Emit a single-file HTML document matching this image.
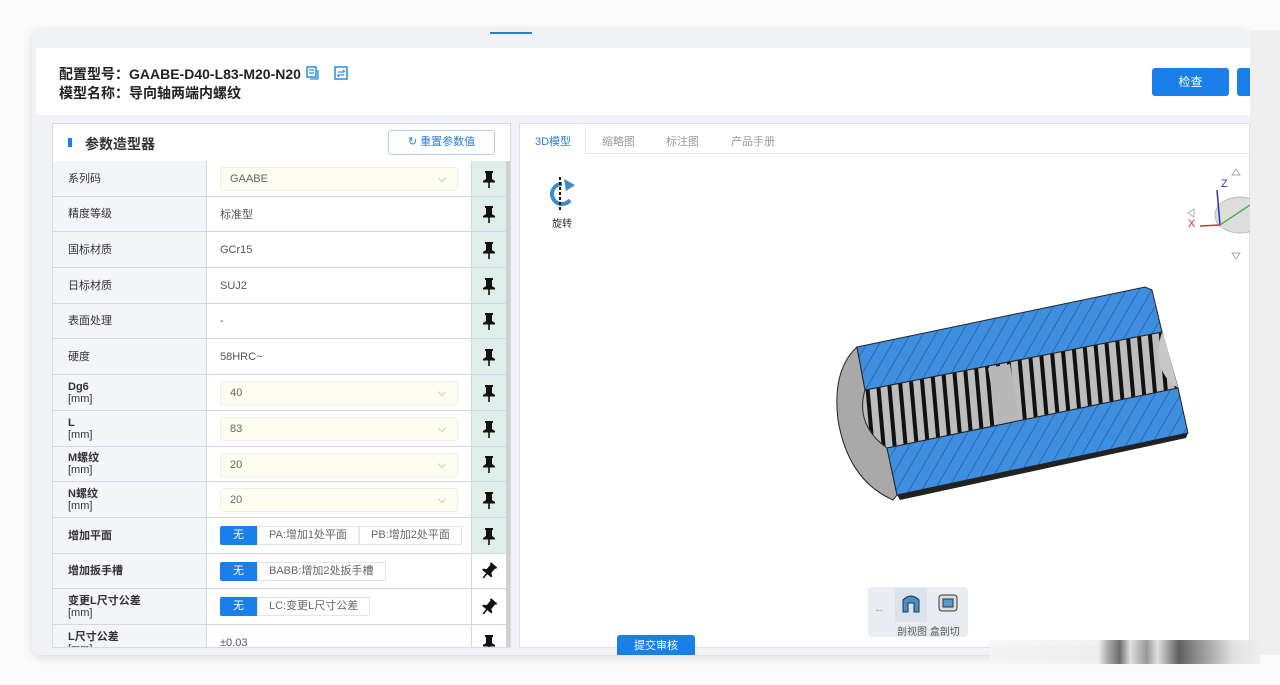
<!DOCTYPE html>
<html><head><meta charset="utf-8">
<style>
*{margin:0;padding:0;box-sizing:border-box}
body{width:1280px;height:685px;overflow:hidden;background:#fbfbfb;font-family:"Liberation Sans","Noto Sans CJK SC",sans-serif;position:relative;color:#333}
.abs{position:absolute}
.frame{left:32px;top:30px;width:1218px;height:625px;background:#f0f2f5;border-radius:8px;box-shadow:0 2px 10px rgba(0,0,0,.15);overflow:hidden}
.rightgray{left:1250px;top:30px;width:30px;height:625px;background:#efefef}
.hdr{left:36px;top:48px;width:1214px;height:67px;background:#fff}
.t1{left:59px;top:64px;font-size:14px;font-weight:bold;color:#222}
.t2{left:59px;top:83px;font-size:14px;font-weight:bold;color:#222}
.btn{background:#1a7fe8;color:#fff;font-size:12px;text-align:center;border-radius:3px}
.lp{left:52px;top:123px;width:459px;height:525px;background:#fff;border:1px solid #d5dbe3;overflow:hidden}
#rows{background:#cfd9e4}
.row{position:absolute;left:0;width:453px;background:#fff}
.lab{position:absolute;left:0;top:0;width:154px;height:100%;background:#f3f5f8;border-right:1px solid #cfd9e4;font-size:11px;color:#333;padding-left:15px;display:flex;flex-direction:column;justify-content:center;line-height:12px}
.lab b{font-weight:bold}
.val{position:absolute;left:155px;top:0;width:263px;height:100%;font-size:11px;color:#555;display:flex;align-items:center;padding-left:12px}
.sel{position:absolute;left:167px;top:6px;width:238px;height:24px;background:#fdfdf0;border:1px solid #eee;border-radius:3px;font-size:11px;color:#666;padding-left:9px;line-height:22px}
.sel:after{content:"";position:absolute;right:12px;top:7px;width:5px;height:5px;border-right:1px solid #ccc;border-bottom:1px solid #ccc;transform:rotate(45deg)}
.pin{position:absolute;left:418px;top:0;width:35px;height:100%;display:flex;align-items:center;justify-content:center;border-left:1px solid #cfd9e4}
.g{background:#dfeee9}
.seg{position:absolute;left:167px;top:8px;height:19px;display:flex;font-size:11px}
.seg span{border:1px solid #e2e5ea;padding:0 11px;line-height:17px;color:#666;background:#fff}
.seg span.on{background:#1a7fe8;color:#fff;border-color:#1a7fe8;padding:0 12px;border-radius:2px 0 0 2px}
.rp{left:519px;top:123px;width:731px;height:525px;background:#fff;border:1px solid #dde2e8}
.tab{font-size:11px;color:#999;top:133px}
</style></head><body>
<svg width="0" height="0" style="position:absolute"><defs>
<symbol id="p" viewBox="0 0 14 18"><path d="M3 1h8v2h-1v6l3 2v1.5H1V11l3-2V3H3z" fill="#111"/><rect x="6.2" y="12" width="1.6" height="6" fill="#111"/></symbol>
<symbol id="p2" viewBox="0 0 18 18"><g transform="rotate(40 9 9)"><path d="M5 1h8v2h-1v6l3 2v1.5H3V11l3-2V3H5z" fill="#111"/><rect x="8.2" y="12" width="1.6" height="6" fill="#111"/></g></symbol>
</defs></svg>
<div class="abs frame"></div>
<div class="abs rightgray"></div>
<div class="abs" style="left:490px;top:32px;width:42px;height:2px;background:#2b7fc4"></div>
<div class="abs hdr"></div>
<div class="abs t1">配置型号：GAABE-D40-L83-M20-N20</div>
<div class="abs t2">模型名称：导向轴两端内螺纹</div>
<svg class="abs" style="left:306px;top:66px" width="14" height="14"><rect x="1" y="1" width="9" height="10" fill="none" stroke="#2d8ad6" stroke-width="1.5"/><path d="M3 4h5M3 7h5M12 4v9H4" stroke="#2d8ad6" stroke-width="1.3" fill="none"/></svg>
<svg class="abs" style="left:334px;top:66px" width="14" height="14"><rect x="1" y="1" width="12" height="12" fill="none" stroke="#2d8ad6" stroke-width="1.5"/><path d="M4 6h6M4 9h6M9 4l2 2M5 11l-2-2" stroke="#2d8ad6" stroke-width="1.2" fill="none"/></svg>
<div class="abs btn" style="left:1152px;top:68px;width:77px;height:28px;line-height:28px">检查</div>
<div class="abs btn" style="left:1237px;top:68px;width:13px;height:28px;border-radius:3px 0 0 3px"></div>

<div class="abs lp">
 <div class="abs" style="left:15px;top:14px;width:4px;height:9px;background:#1a7fe8"></div>
 <div class="abs" style="left:32px;top:10px;font-size:14px;font-weight:bold;color:#333">参数造型器</div>
 <div class="abs" style="left:335px;top:6px;width:107px;height:25px;border:1px solid #b9cfe6;border-radius:3px;font-size:11px;color:#2d7fd0;line-height:23px;text-align:center">↻ 重置参数值</div>
 <div class="abs" style="left:0;top:37px;width:459px;height:1px;background:#cfd9e4"></div>
 <div class="abs" style="left:453px;top:38px;width:5px;height:487px;background:#d0d0d0"></div>
</div>
<div class="abs" id="rows" style="left:53px;top:161px;width:453px;height:486px;overflow:hidden">
 <div class="row" style="top:0;height:35px"><div class="lab">系列码</div><div class="sel">GAABE</div><div class="pin g"><svg width="14" height="18"><use href="#p"/></svg></div></div>
 <div class="row" style="top:36px;height:34px"><div class="lab">精度等级</div><div class="val">标准型</div><div class="pin g"><svg width="14" height="18"><use href="#p"/></svg></div></div>
 <div class="row" style="top:71px;height:35px"><div class="lab">国标材质</div><div class="val">GCr15</div><div class="pin g"><svg width="14" height="18"><use href="#p"/></svg></div></div>
 <div class="row" style="top:107px;height:35px"><div class="lab">日标材质</div><div class="val">SUJ2</div><div class="pin g"><svg width="14" height="18"><use href="#p"/></svg></div></div>
 <div class="row" style="top:143px;height:34px"><div class="lab">表面处理</div><div class="val">-</div><div class="pin g"><svg width="14" height="18"><use href="#p"/></svg></div></div>
 <div class="row" style="top:178px;height:35px"><div class="lab">硬度</div><div class="val">58HRC~</div><div class="pin g"><svg width="14" height="18"><use href="#p"/></svg></div></div>
 <div class="row" style="top:214px;height:35px"><div class="lab"><b>Dg6</b>[mm]</div><div class="sel">40</div><div class="pin g"><svg width="14" height="18"><use href="#p"/></svg></div></div>
 <div class="row" style="top:250px;height:35px"><div class="lab"><b>L</b>[mm]</div><div class="sel">83</div><div class="pin g"><svg width="14" height="18"><use href="#p"/></svg></div></div>
 <div class="row" style="top:286px;height:34px"><div class="lab"><b>M螺纹</b>[mm]</div><div class="sel">20</div><div class="pin g"><svg width="14" height="18"><use href="#p"/></svg></div></div>
 <div class="row" style="top:321px;height:35px"><div class="lab"><b>N螺纹</b>[mm]</div><div class="sel">20</div><div class="pin g"><svg width="14" height="18"><use href="#p"/></svg></div></div>
 <div class="row" style="top:357px;height:35px"><div class="lab"><b>增加平面</b></div><div class="seg"><span class="on">无</span><span>PA:增加1处平面</span><span>PB:增加2处平面</span></div><div class="pin g"><svg width="14" height="18"><use href="#p"/></svg></div></div>
 <div class="row" style="top:393px;height:34px"><div class="lab"><b>增加扳手槽</b></div><div class="seg"><span class="on">无</span><span>BABB:增加2处扳手槽</span></div><div class="pin"><svg width="18" height="18"><use href="#p2"/></svg></div></div>
 <div class="row" style="top:428px;height:35px"><div class="lab"><b>变更L尺寸公差</b>[mm]</div><div class="seg"><span class="on">无</span><span>LC:变更L尺寸公差</span></div><div class="pin"><svg width="18" height="18"><use href="#p2"/></svg></div></div>
 <div class="row" style="top:464px;height:35px"><div class="lab"><b>L尺寸公差</b>[mm]</div><div class="val">±0.03</div><div class="pin"><svg width="14" height="18"><use href="#p"/></svg></div></div>
</div>

<div class="abs rp"></div>
<div class="abs" style="left:585px;top:124px;width:665px;height:30px;border-bottom:1px solid #e6e9ee;border-left:1px solid #e6e9ee"></div>
<div class="abs tab" style="left:535px;color:#2d7fd0">3D模型</div>
<div class="abs tab" style="left:602px">缩略图</div>
<div class="abs tab" style="left:666px">标注图</div>
<div class="abs tab" style="left:731px">产品手册</div>
<svg class="abs" style="left:544px;top:176px" width="34" height="36"><path d="M18 8 A10 10 0 1 0 26 24" fill="none" stroke="#3d8cc7" stroke-width="4"/><path d="M20 3 L31 9 L22 15 Z" fill="#3d8cc7"/><line x1="16" y1="1" x2="16" y2="35" stroke="#111" stroke-width="2" stroke-dasharray="3 2"/></svg>
<div class="abs" style="left:552px;top:215px;font-size:10px;color:#333">旋转</div>

<svg class="abs" style="left:1180px;top:165px" width="70" height="100">
<path d="M52 10l4-6 4 6z M14 52l-6-4 6-4z M52 88l4 6 4-6z" fill="none" stroke="#aaa"/>
<ellipse cx="60" cy="50" rx="25" ry="18" fill="#ddd" stroke="#bbb"/>
<line x1="40" y1="60" x2="20" y2="61" stroke="#c33" stroke-width="1.5"/><line x1="40" y1="60" x2="37" y2="25" stroke="#33a" stroke-width="1.5"/><line x1="40" y1="60" x2="70" y2="40" stroke="#3a3" stroke-width="1.2"/>
<text x="8" y="62" font-size="11" fill="#c33" font-family="Liberation Sans">X</text><text x="41" y="22" font-size="11" fill="#33a" font-family="Liberation Sans">Z</text>
</svg>

<svg class="abs" style="left:820px;top:270px" width="400" height="250">
<defs>
<pattern id="h" width="11" height="11" patternUnits="userSpaceOnUse" patternTransform="rotate(30)"><rect width="11" height="11" fill="#3e8fe0"/><line x1="0" y1="0" x2="0" y2="11" stroke="#1d4f8a" stroke-width="1.2"/></pattern>
<pattern id="s" width="11" height="20" patternUnits="userSpaceOnUse" patternTransform="rotate(-5)"><rect width="11" height="20" fill="#bdbdbd"/><rect x="2" width="4" height="20" fill="#111"/></pattern>
</defs>
<path d="M37 77 Q12 100 18 150 Q28 210 73 230 L77 225 L67 178 Q35 155 45 120 Z" fill="#a9a9a9" stroke="#222"/>
<path d="M45 120 L342 62 L358 118 L67 178 Q35 155 45 120 Z" fill="url(#s)" stroke="#333"/>
<path d="M342 62 Q330 100 358 118 L345 70 Z" fill="#c8c8c8"/>
<path d="M168 98 L190 94 L200 154 L178 158 Z" fill="#b8b8b8"/>
<path d="M37 77 L325 17 L332 20 L342 62 L45 120 Z" fill="url(#h)" stroke="#222"/>
<path d="M67 178 L358 118 L368 163 L77 225 Z" fill="url(#h)" stroke="#222"/>
<path d="M77 225 L368 163 L366 168 L80 230 Z" fill="#222"/>
</svg>

<div class="abs" style="left:868px;top:587px;width:100px;height:50px;background:#e9edf2;border-radius:4px"></div>
<div class="abs" style="left:895px;top:588px;width:32px;height:34px;background:#dbe3ec"></div>
<div class="abs" style="left:874px;top:603px;font-size:11px;color:#999">←</div>
<svg class="abs" style="left:900px;top:592px" width="22" height="22"><path d="M3 8 Q11 0 19 8 V20 H14 V11 H8 V20 H3 Z" fill="#4a90c8" stroke="#234" stroke-width="1"/></svg>
<svg class="abs" style="left:937px;top:592px" width="22" height="22"><rect x="2" y="3" width="18" height="16" rx="3" fill="#ddd" stroke="#333"/><rect x="6" y="7" width="10" height="8" fill="#5a9ad0" stroke="#333"/></svg>
<div class="abs" style="left:897px;top:623px;font-size:10px;color:#555">剖视图 盒剖切</div>

<div class="abs btn" style="left:617px;top:635px;width:78px;height:20px;line-height:22px;font-size:11px;border-radius:3px 3px 0 0">提交审核</div>
<div class="abs" style="left:990px;top:640px;width:270px;height:24px;background:linear-gradient(90deg,#f4f4f4 0,#eee 40%,#999 44%,#555 48%,#ddd 52%,#888 58%,#ddd 62%,#444 70%,#777 76%,#ddd 90%,#eee 100%);opacity:.85"></div>
</body></html>
